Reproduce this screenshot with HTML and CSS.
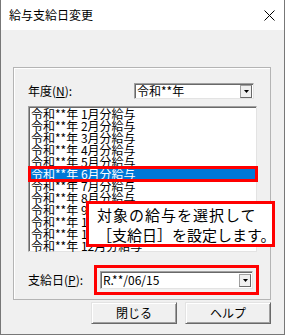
FILE: index.html
```html
<!DOCTYPE html>
<html lang="ja">
<head>
    <meta charset="UTF-8">
    <title>給与支給日変更</title>
    <link rel="stylesheet" href="styles.css">
</head>
<body>
    <div class="window">
        <div class="titlebar">
            <span class="title">給与支給日変更</span>
            <svg class="close" width="11" height="11" viewBox="0 0 11 11">
                <path d="M0.5 0.5 L10.5 10.5 M10.5 0.5 L0.5 10.5" stroke="#000" stroke-width="1" fill="none"/>
            </svg>
        </div>
        <div class="client">
            <div class="group">
                <div class="field-row year-row">
                    <label class="field-label year-label">年度(<u>N</u>):</label>
                    <div class="combo year-combo">
                        <span class="combo-text">令和**年</span>
                        <span class="combo-btn"><svg width="5" height="3" viewBox="0 0 5 3"><path d="M0 0 H5 L2.5 3 Z" fill="#000"/></svg></span>
                    </div>
                </div>
                <ul class="list">
                    <li>令和**年 1月分給与</li>
                    <li>令和**年 2月分給与</li>
                    <li>令和**年 3月分給与</li>
                    <li>令和**年 4月分給与</li>
                    <li>令和**年 5月分給与</li>
                    <li class="selected">令和**年 6月分給与</li>
                    <li>令和**年 7月分給与</li>
                    <li>令和**年 8月分給与</li>
                    <li>令和**年 9月分給与</li>
                    <li>令和**年 10月分給与</li>
                    <li>令和**年 11月分給与</li>
                    <li>令和**年 12月分給与</li>
                </ul>
                <div class="field-row pay-row">
                    <label class="field-label pay-label">支給日(<u>P</u>):</label>
                    <div class="combo pay-combo marked">
                        <span class="combo-text">R.**/06/15</span>
                        <span class="combo-btn"><svg width="5" height="3" viewBox="0 0 5 3"><path d="M0 0 H5 L2.5 3 Z" fill="#000"/></svg></span>
                    </div>
                </div>
            </div>
            <div class="buttons">
                <button class="btn">閉じる</button>
                <button class="btn">ヘルプ</button>
            </div>
        </div>

        <!-- annotation balloon -->
        <div class="callout"><span class="callout-first">対象の給与を選択して</span><br>［支給日］を設定します。</div>
    </div>
</body>
</html>
```

FILE: styles.css
```css
body {
    margin: 0;
    padding: 0;
    background-color: #f0f0f0;
    font-family: "Noto Sans CJK JP", sans-serif;
    font-size: 12px;
    color: #000;
}

.window {
    position: relative;
    width: 285px;
    height: 335px;
    box-sizing: border-box;
    border-left: 1px solid #777;
    border-right: 1px solid #777;
    border-bottom: 1px solid #777;
    background-color: #f0f0f0;
}

.titlebar {
    height: 30px;
    background-color: #fff;
    display: flex;
    align-items: center;
    padding-left: 8px;
    padding-right: 9px;
}

.title {
    flex: 1;
    font-size: 12px;
    line-height: 14px;
}

.close {
    display: block;
}

.client {
    padding: 37px 13px 0 12px;
}

/* group box */
.group {
    width: 258px;
    height: 233px;
    box-sizing: border-box;
    border: 1px solid #b4b4b4;
    box-shadow: inset 1px 1px #fff;
    padding: 15px 0 0 14px;
}

.field-row {
    display: flex;
    align-items: center;
}

.field-label {
    line-height: 14px;
}

.field-label u {
    text-decoration: underline;
}

.year-label {
    width: 106px;
}

.pay-label {
    width: 72px;
}

.combo {
    display: flex;
    align-items: center;
    box-sizing: border-box;
    height: 16px;
    background-color: #fff;
    border-top: 1px solid #a0a0a0;
    border-left: 1px solid #a0a0a0;
    border-right: 1px solid #e3e3e3;
    border-bottom: 1px solid #e3e3e3;
    box-shadow: inset 1px 1px #696969;
}

.year-combo {
    width: 120px;
}

.pay-combo {
    width: 153px;
    height: 18px;
}

.combo-text {
    flex: 1;
    padding-left: 2px;
    line-height: 14px;
    white-space: nowrap;
}

.combo-btn {
    display: flex;
    align-items: center;
    justify-content: center;
    width: 10px;
    height: 11px;
    margin-right: 1px;
    background-color: #f0f0f0;
    border: 1px solid #a0a0a0;
    border-right-color: #696969;
    border-bottom-color: #696969;
}

.combo-btn svg {
    display: block;
}

.marked {
    outline: 3px solid #f00;
    outline-offset: 3px;
}

/* list box */
.list {
    list-style: none;
    margin: 7px 0 0 0;
    padding: 1px 0 0 1px;
    width: 229px;
    height: 146px;
    box-sizing: border-box;
    background-color: #fff;
    border-top: 1px solid #a0a0a0;
    border-left: 1px solid #a0a0a0;
    border-right: 1px solid #e3e3e3;
    border-bottom: 1px solid #e3e3e3;
    box-shadow: inset 1px 1px #696969;
}

.list li {
    height: 12px;
    line-height: 12px;
    padding-left: 1px;
    white-space: nowrap;
}

.list li.selected {
    background-color: #0078d7;
    color: #fff;
    outline: 3px solid #f00;
    outline-offset: -1px;
}

.pay-row {
    margin-top: 19px;
}

/* buttons */
.buttons {
    display: flex;
    justify-content: flex-end;
    gap: 8px;
    margin-top: 2px;
}

.btn {
    width: 86px;
    height: 22px;
    padding: 0;
    font-family: "Noto Sans CJK JP", sans-serif;
    font-size: 12px;
    line-height: 14px;
    color: #000;
    background-color: #f0f0f0;
    border: 1px solid;
    border-color: #e3e3e3 #696969 #696969 #e3e3e3;
    box-shadow: inset 1px 1px #fff, inset -1px -1px #a0a0a0;
}

/* annotation */
.callout {
    position: absolute;
    left: 85px;
    top: 201px;
    width: 189px;
    height: 46px;
    box-sizing: border-box;
    border: 3px solid #f00;
    background-color: #fff;
    padding: 1px 0 0 8px;
    font-size: 15px;
    line-height: 20px;
    white-space: nowrap;
}

.callout-first {
    letter-spacing: 1px;
}
```
